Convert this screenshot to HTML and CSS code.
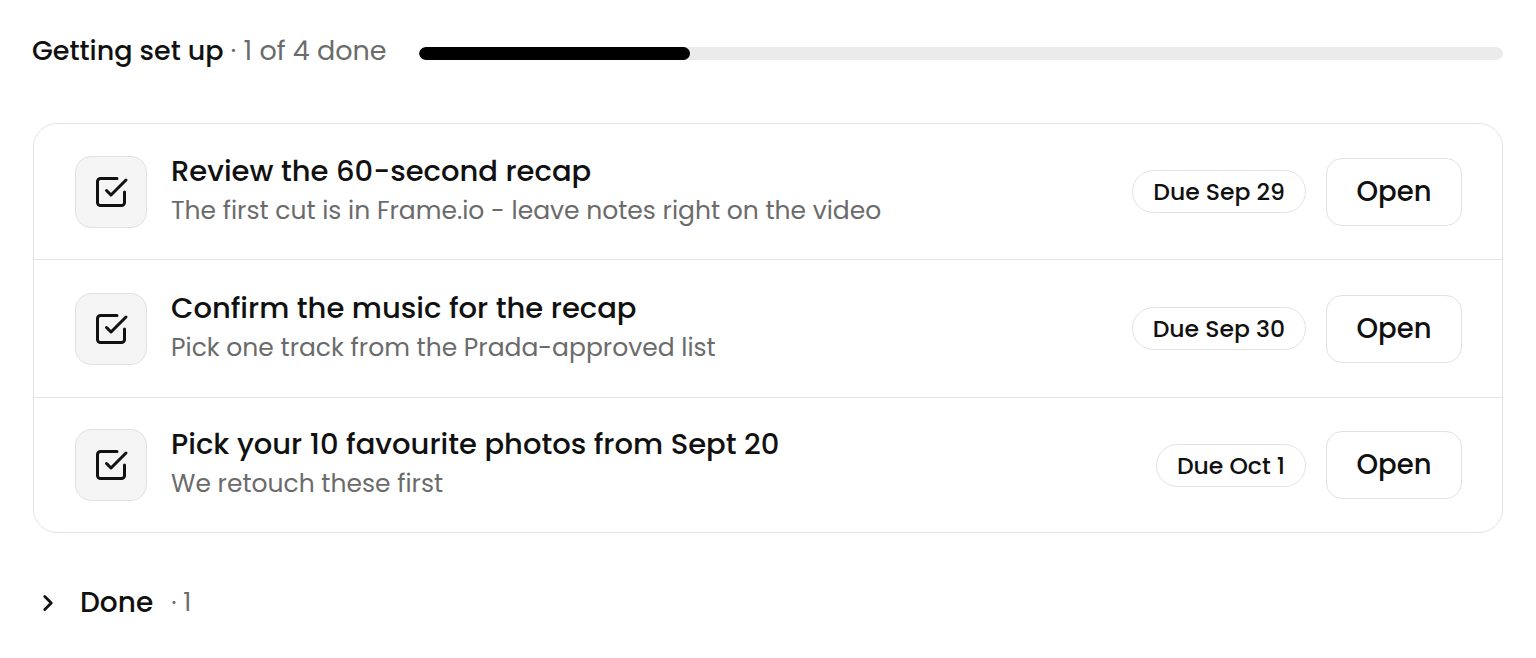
FILE: index.html
```html
<!DOCTYPE html>
<html>
<head>
<meta charset="utf-8">
<link rel="stylesheet" href="styles.css">
</head>
<body>
<div class="page">
  <div class="header">
    <div class="heading">Getting set up <span class="muted">· 1 of 4 done</span></div>
    <div class="progress"><div class="progress-fill" style="width:25%"></div></div>
  </div>

  <div class="card">
    <div class="row">
      <div class="icon-box">
        <svg width="36" height="36" viewBox="0 0 24 24" fill="none" stroke="#111" stroke-width="2" stroke-linecap="round" stroke-linejoin="round"><path d="m9 11 3 3L22 4"/><path d="M21 12v7a2 2 0 0 1-2 2H5a2 2 0 0 1-2-2V5a2 2 0 0 1 2-2h11"/></svg>
      </div>
      <div class="text">
        <div class="title">Review the 60-second recap</div>
        <div class="sub">The first cut is in Frame.io - leave notes right on the video</div>
      </div>
      <div class="pill">Due Sep 29</div>
      <button class="btn">Open</button>
    </div>
    <div class="row">
      <div class="icon-box">
        <svg width="36" height="36" viewBox="0 0 24 24" fill="none" stroke="#111" stroke-width="2" stroke-linecap="round" stroke-linejoin="round"><path d="m9 11 3 3L22 4"/><path d="M21 12v7a2 2 0 0 1-2 2H5a2 2 0 0 1-2-2V5a2 2 0 0 1 2-2h11"/></svg>
      </div>
      <div class="text">
        <div class="title">Confirm the music for the recap</div>
        <div class="sub">Pick one track from the Prada-approved list</div>
      </div>
      <div class="pill">Due Sep 30</div>
      <button class="btn">Open</button>
    </div>
    <div class="row">
      <div class="icon-box">
        <svg width="36" height="36" viewBox="0 0 24 24" fill="none" stroke="#111" stroke-width="2" stroke-linecap="round" stroke-linejoin="round"><path d="m9 11 3 3L22 4"/><path d="M21 12v7a2 2 0 0 1-2 2H5a2 2 0 0 1-2-2V5a2 2 0 0 1 2-2h11"/></svg>
      </div>
      <div class="text">
        <div class="title">Pick your 10 favourite photos from Sept 20</div>
        <div class="sub">We retouch these first</div>
      </div>
      <div class="pill">Due Oct 1</div>
      <button class="btn">Open</button>
    </div>
  </div>

  <div class="done">
    <svg class="chev" width="26" height="26" viewBox="0 0 24 24" fill="none" stroke="#111" stroke-width="2.6" stroke-linecap="round" stroke-linejoin="round"><path d="m9 18 6-6-6-6"/></svg>
    <span class="done-label">Done</span>
    <span class="muted done-count">· 1</span>
  </div>
</div>
</body>
</html>
```

FILE: styles.css
```css
* { box-sizing: border-box; }
html, body { margin: 0; padding: 0; background: #fff; }
body {
  font-family: "Poppins", "Inter", "Noto Sans", sans-serif;
  color: #111;
}
.page {
  padding: 29px 33px 0 32px;
}
.header {
  display: flex;
  align-items: center;
  gap: 32px;
  height: 44px;
}
.heading {
  font-size: 27px;
  font-weight: 500;
  white-space: nowrap;
}
.muted { color: #6b6b6b; font-weight: 400; }
.progress {
  flex: 1;
  height: 13px;
  border-radius: 7px;
  background: #ebebeb;
  margin-top: 5px;
  overflow: hidden;
}
.progress-fill {
  height: 100%;
  background: #000;
  border-radius: 7px;
}
.card {
  margin-top: 50px;
  margin-left: 1px;
  border: 1.5px solid #e4e4e4;
  border-radius: 24px;
  overflow: hidden;
}
.row {
  display: flex;
  align-items: center;
  padding: 0 40px 0 41px;
  height: 138px;
  border-top: 1.5px solid #e4e4e4;
}
.row:first-child { border-top: none; height: 135px; }
.row:last-child { height: 135px; }
.icon-box {
  width: 72px;
  height: 72px;
  flex: none;
  border-radius: 16px;
  background: #f5f5f5;
  border: 1.5px solid #e2e2e2;
  display: flex;
  align-items: center;
  justify-content: center;
}
.text {
  flex: 1;
  margin-left: 24px;
  margin-bottom: 3px;
  display: flex;
  flex-direction: column;
  gap: 1px;
}
.title {
  font-size: 29px;
  font-weight: 500;
  line-height: 40px;
}
.sub {
  font-size: 25px;
  line-height: 38px;
  color: #6b6b6b;
}
.pill {
  flex: none;
  height: 43px;
  padding: 0 20px;
  border: 1.5px solid #e2e2e2;
  border-radius: 22px;
  display: flex;
  align-items: center;
  font-size: 23.5px;
  font-weight: 500;
}
.btn {
  flex: none;
  margin-left: 20px;
  width: 136px;
  height: 68px;
  border: 1.5px solid #e2e2e2;
  border-radius: 16px;
  background: #fff;
  font-family: inherit;
  font-size: 27.5px;
  font-weight: 500;
  color: #111;
}
.done {
  display: flex;
  align-items: center;
  margin-top: 51px;
  height: 38px;
  padding-left: 3px;
}
.chev { flex: none; }
.done-label {
  margin-left: 19px;
  font-size: 28px;
  font-weight: 500;
}
.done-count {
  margin-left: 18px;
  font-size: 25px;
}
```
